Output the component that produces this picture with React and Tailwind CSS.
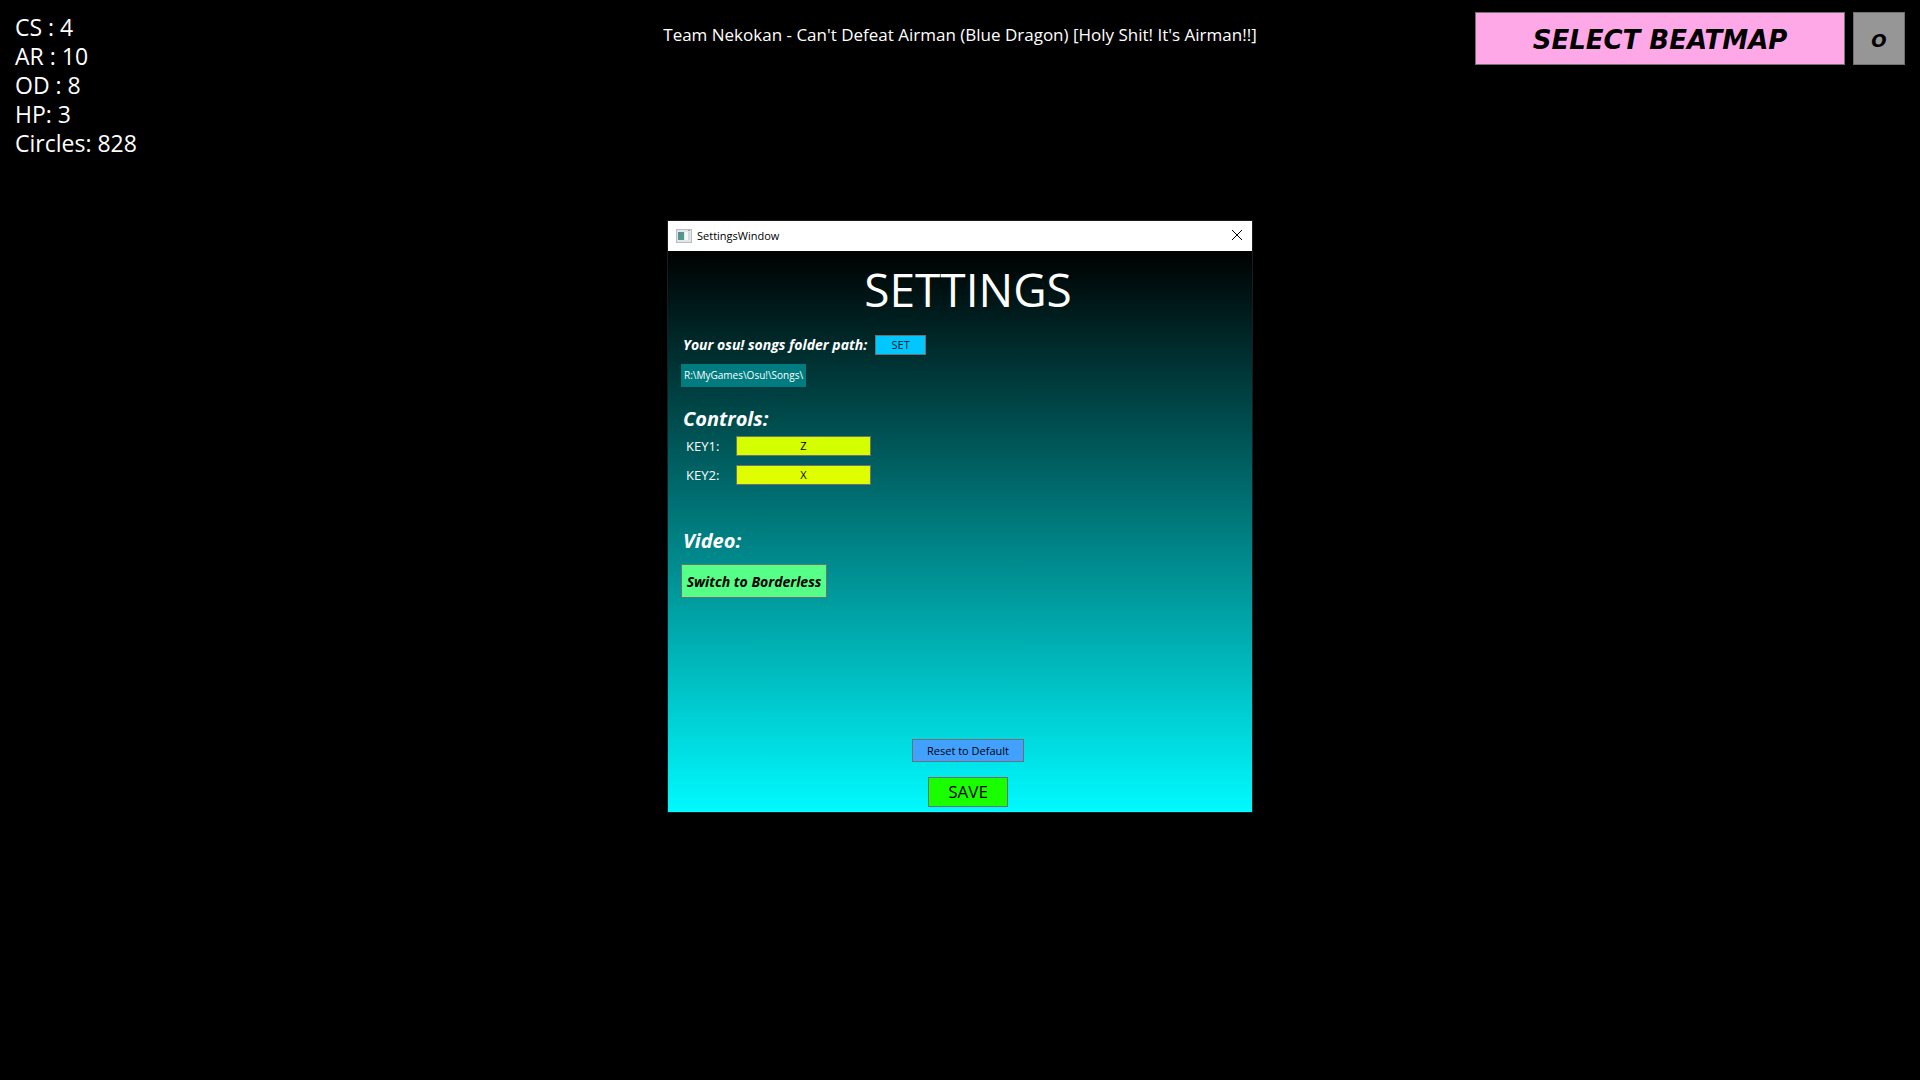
import React, { useState } from 'react';

const STATS = ['CS : 4', 'AR : 10', 'OD : 8', 'HP: 3', 'Circles: 828'];

const AppIcon = () => (
  <svg width="16" height="14" viewBox="0 0 16 14" aria-hidden="true">
    <defs>
      <linearGradient id="pane" x1="0" y1="0" x2="1" y2="1">
        <stop offset="0" stopColor="#5a86a8" />
        <stop offset="1" stopColor="#4fa574" />
      </linearGradient>
    </defs>
    <rect x="0.5" y="0.5" width="15" height="13" fill="#e4e6ea" stroke="#b9bdc3" />
    <rect x="2" y="3" width="6" height="8" fill="url(#pane)" />
    <rect x="9" y="3" width="3" height="8" fill="#f7f7f7" />
    <rect x="12" y="3" width="2" height="8" fill="#d3dbe0" />
    <rect x="12" y="1" width="2" height="1" fill="#7fae96" />
  </svg>
);

const CloseIcon = () => (
  <svg width="12" height="12" viewBox="0 0 12 12" aria-hidden="true">
    <path d="M1 1L11 11M11 1L1 11" stroke="#000" strokeWidth="1" fill="none" />
  </svg>
);

const SettingsWindow = ({ onClose }) => {
  const [borderless, setBorderless] = useState(false);

  return (
    <section className="w-[586px] border border-[#1c1c1c]">
      {/* TITLE BAR */}
      <div className="flex h-[30px] items-center justify-between bg-white pl-2 pr-2 text-black">
        <div className="flex items-center gap-[5px]">
          <AppIcon />
          <span className="text-[11px]">SettingsWindow</span>
        </div>
        <button onClick={onClose} aria-label="Close" className="flex h-6 w-[14px] items-center justify-center pb-[2px]">
          <CloseIcon />
        </button>
      </div>

      <div className="flex flex-col bg-linear-to-b/srgb from-black to-[#00faff] px-[13px] pb-[5px] text-white">
        <h1 className="pl-4 pt-[6px] text-center text-[46px] leading-[64px]">SETTINGS</h1>

        {/* SONGS FOLDER */}
        <div className="mt-[14px] flex items-center gap-2">
          <span className="pl-[2px] text-[14px] leading-5 font-bold italic">Your osu! songs folder path:</span>
          <button className="h-5 w-[51px] border border-[#707070] bg-[#00c8ff] text-[11px] leading-4 text-[#001a22]">SET</button>
        </div>
        <p className="mt-[9px] self-start bg-[#007b7f] px-[3px] text-[10px] leading-[23px]">R:\MyGames\Osu!\Songs\</p>

        {/* CONTROLS */}
        <h2 className="mt-5 pl-[2px] text-[20px] leading-6 font-bold italic">Controls:</h2>
        <div className="mt-[5px] flex flex-col gap-[9px]">
          <div className="flex items-center">
            <label htmlFor="key1" className="w-[55px] pl-[5px] text-[13px] leading-5">KEY1:</label>
            <button id="key1" className="h-5 w-[135px] border border-[#707070] bg-[#d4ff00] text-[11px] leading-4 text-black">Z</button>
          </div>
          <div className="flex items-center">
            <label htmlFor="key2" className="w-[55px] pl-[5px] text-[13px] leading-5">KEY2:</label>
            <button id="key2" className="h-5 w-[135px] border border-[#707070] bg-[#dfff00] text-[11px] leading-4 text-black">X</button>
          </div>
        </div>

        {/* VIDEO */}
        <h2 className="mt-11 pl-[2px] text-[20px] leading-6 font-bold italic">Video:</h2>
        <button
          onClick={() => setBorderless(!borderless)}
          className="mt-[11px] h-[34px] w-[146px] self-start border border-[#707070] bg-[#55ff88] pt-[2px] text-[14px] leading-5 font-bold whitespace-nowrap text-black italic"
        >
          {borderless ? 'Switch to Window' : 'Switch to Borderless'}
        </button>

        <div className="mt-[141px] flex flex-col items-center gap-[15px] pl-4 text-black">
          <button className="h-[23px] w-[112px] border border-[#707070] bg-[#42a0ff] text-[11px] leading-4">Reset to Default</button>
          <button className="h-[30px] w-20 border border-[#707070] bg-[#1aff00] text-[17px] leading-6">SAVE</button>
        </div>
      </div>
    </section>
  );
};

const App = () => {
  const [open, setOpen] = useState(true);

  return (
    <div className="min-h-screen bg-black font-['Open_Sans','Noto_Sans',sans-serif] text-white">
      <header className="grid grid-cols-[1fr_auto_1fr] items-start px-[15px] pt-3">
        <ul className="pt-[1px] pb-[1px] text-[23px] leading-[29px]">
          {STATS.map(stat => <li key={stat}>{stat}</li>)}
        </ul>
        <p className="pt-[11px] text-[17px] leading-6">
          Team Nekokan - Can't Defeat Airman (Blue Dragon) [Holy Shit! It's Airman!!]
        </p>
        <div className="flex justify-end gap-2 font-['DejaVu_Sans',sans-serif] font-bold text-black italic">
          <button className="h-[53px] w-[370px] border border-[#707070] bg-[#ffa8e8] pt-1 text-[26px]">SELECT BEATMAP</button>
          <button onClick={() => setOpen(!open)} className="h-[53px] w-[52px] border border-[#707070] bg-[#969696] pt-1 text-[18px]">O</button>
        </div>
      </header>

      <main className="mt-[61px] flex justify-center">
        {open && <SettingsWindow onClose={() => setOpen(false)} />}
      </main>
    </div>
  );
};

export default App;
